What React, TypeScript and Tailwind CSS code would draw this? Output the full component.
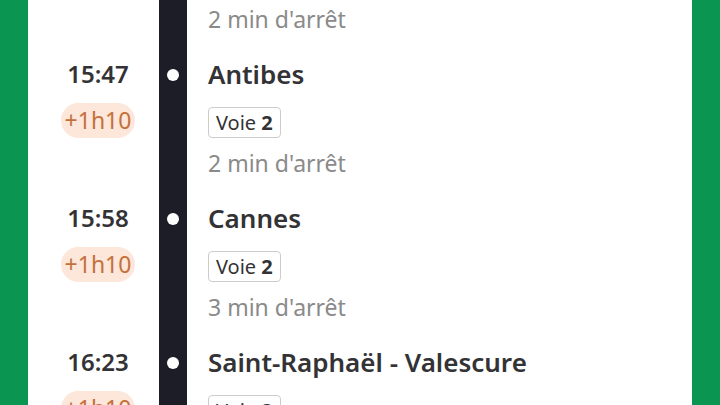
import React from "react";

type Stop = {
  time: string;
  delay: string;
  name: string;
  track: string;
  halt: string;
};

const stops: Stop[] = [
  { time: "15:41", delay: "+1h10", name: "Juan-les-Pins", track: "2", halt: "2 min d'arrêt" },
  { time: "15:47", delay: "+1h10", name: "Antibes", track: "2", halt: "2 min d'arrêt" },
  { time: "15:58", delay: "+1h10", name: "Cannes", track: "2", halt: "3 min d'arrêt" },
  { time: "16:23", delay: "+1h10", name: "Saint-Raphaël - Valescure", track: "2", halt: "2 min d'arrêt" },
];

const StopRow: React.FC<{ stop: Stop }> = ({ stop }) => (
  <div className="flex">
    {/* heure + retard */}
    <div className="w-[131px] shrink-0 pl-[9px] pt-[13px] flex flex-col items-center">
      <span className="h-[30px] leading-[30px] text-[24px] font-semibold text-[#333336]">
        {stop.time}
      </span>
      <span className="mt-[14px] h-[35px] leading-[35px] px-[4px] rounded-full bg-[#fde6da] text-[23px] text-[#c4703c]">
        {stop.delay}
      </span>
    </div>

    {/* ligne du trajet */}
    <div className="w-[28px] shrink-0 bg-[#1d1d27] pt-[23px] flex justify-center">
      <div className="w-[12px] h-[12px] rounded-full bg-white" />
    </div>

    {/* gare */}
    <div className="pl-[21px] pt-[13px] pb-[14px] flex flex-col items-start">
      <span className="h-[30px] leading-[30px] text-[26px] font-semibold text-[#333336]">
        {stop.name}
      </span>
      <span className="mt-[18px] h-[31px] leading-[29px] px-[7px] border border-[#cccccc] rounded-[4px] text-[20px] text-[#333336]">
        Voie <span className="font-bold">{stop.track}</span>
      </span>
      <span className="mt-[12px] h-[26px] leading-[26px] text-[23px] text-[#8a8a8a]">
        {stop.halt}
      </span>
    </div>
  </div>
);

export default function App() {
  return (
    <div
      className="w-[720px] h-[405px] overflow-hidden flex bg-[#0a9650]"
      style={{ fontFamily: '"Noto Sans", "Lato", sans-serif' }}
    >
      <div className="w-[28px] shrink-0" />
      <div className="flex-1 bg-white overflow-hidden">
        <div className="-mt-[98px]">
          {stops.map((s) => (
            <StopRow key={s.time} stop={s} />
          ))}
        </div>
      </div>
      <div className="w-[28px] shrink-0" />
    </div>
  );
}
